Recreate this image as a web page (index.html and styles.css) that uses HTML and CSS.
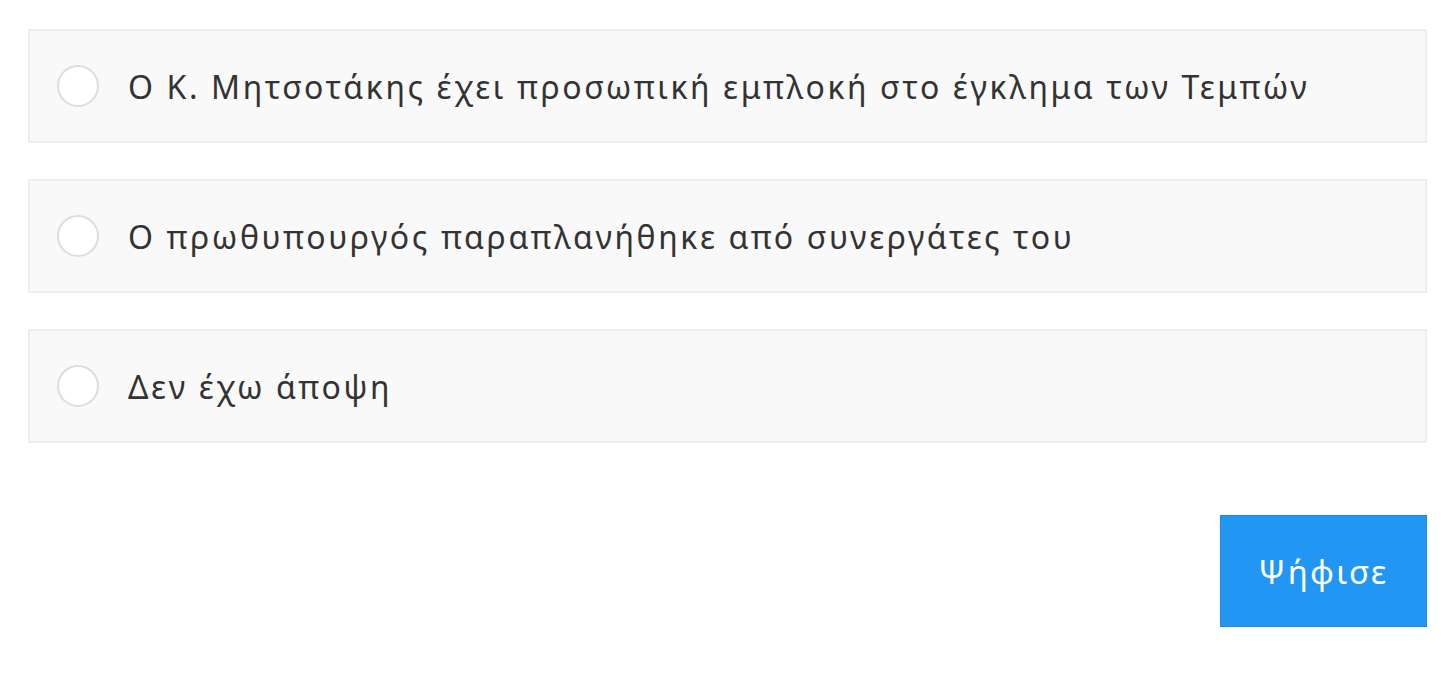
FILE: index.html
```html
<!DOCTYPE html>
<html lang="el">
<head>
<meta charset="utf-8">
<link rel="stylesheet" href="styles.css">
</head>
<body>
<form class="poll">
  <label class="option">
    <span class="radio"></span>
    <span class="label-text">Ο Κ. Μητσοτάκης έχει προσωπική εμπλοκή στο έγκλημα των Τεμπών</span>
  </label>
  <label class="option">
    <span class="radio"></span>
    <span class="label-text">Ο πρωθυπουργός παραπλανήθηκε από συνεργάτες του</span>
  </label>
  <label class="option">
    <span class="radio"></span>
    <span class="label-text">Δεν έχω άποψη</span>
  </label>
  <div class="actions">
    <button type="button" class="vote">Ψήφισε</button>
  </div>
</form>
</body>
</html>
```
FILE: styles.css
```css
html, body {
  margin: 0;
  padding: 0;
  background: #ffffff;
}
body {
  font-family: "Noto Sans", "DejaVu Sans", sans-serif;
  color: #333333;
}
.poll {
  display: flex;
  flex-direction: column;
  gap: 36px;
  padding: 29px 20px 0 28px;
}
.option {
  display: flex;
  align-items: center;
  height: 114px;
  box-sizing: border-box;
  background: #f9f9f9;
  border: 2px solid #eeeeee;
  padding-left: 27px;
}
.radio {
  width: 42px;
  height: 42px;
  box-sizing: border-box;
  border-radius: 50%;
  background: #ffffff;
  border: 2px solid #dddddd;
  flex: none;
}
.label-text {
  margin-left: 29px;
  font-size: 32px;
  letter-spacing: 2.6px;
}
.actions {
  display: flex;
  justify-content: flex-end;
  margin-top: 36px;
}
.vote {
  width: 207px;
  height: 112px;
  background: #2196f3;
  border: 1px solid #1e88e5;
  color: #ffffff;
  font-family: "Noto Sans", "DejaVu Sans", sans-serif;
  font-size: 33px;
  letter-spacing: 2.3px;
  padding: 0;
}
```
